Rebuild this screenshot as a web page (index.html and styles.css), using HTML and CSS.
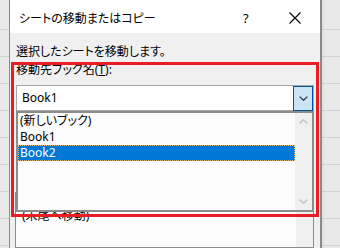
FILE: index.html
```html
<!DOCTYPE html>
<html lang="ja">
<head>
<meta charset="utf-8">
<title>シートの移動またはコピー</title>
<link rel="stylesheet" href="styles.css">
</head>
<body>
<div class="screen">
  <div class="sheet sheet-left"></div>
  <div class="dialog">
    <div class="titlebar">
      <span class="title">シートの移動またはコピー</span>
      <span class="help">?</span>
      <svg class="close" width="12" height="12" viewBox="0 0 12 12"><path d="M0.5 0.5 L11.5 11.5 M11.5 0.5 L0.5 11.5" stroke="#000" stroke-width="1.1" fill="none"/></svg>
    </div>
    <div class="body">
      <p class="intro">選択したシートを移動します。</p>
      <div class="label">移動先ブック名(<u>T</u>):</div>
      <div class="combo">
        <span class="combo-value">Book1</span>
        <span class="dd-btn"><svg width="9" height="5" viewBox="0 0 9 5"><polyline points="0.6,0.6 4.5,4.3 8.4,0.6" stroke="#3a3a3a" stroke-width="1.3" fill="none"/></svg></span>
        <div class="dropdown">
          <ul class="options">
            <li class="opt">(新しいブック)</li>
            <li class="opt">Book1</li>
            <li class="opt selected">Book2</li>
          </ul>
          <div class="scrollbar">
            <span class="arrow"><svg width="9" height="5" viewBox="0 0 9 5"><polyline points="0.6,4.4 4.5,0.7 8.4,4.4" stroke="#c4c4c4" stroke-width="1.5" fill="none"/></svg></span>
            <span class="arrow"><svg width="9" height="5" viewBox="0 0 9 5"><polyline points="0.6,0.6 4.5,4.3 8.4,0.6" stroke="#c4c4c4" stroke-width="1.5" fill="none"/></svg></span>
          </div>
        </div>
      </div>
      <div class="sheetlist">
        <ul class="sheet-items">
          <li class="opt">(末尾へ移動)</li>
        </ul>
        <div class="scrollbar"></div>
      </div>
    </div>
  </div>
  <div class="sheet sheet-right"></div>
  <div class="focus-box"></div>
</div>
</body>
</html>
```
FILE: styles.css
```css
* { box-sizing: border-box; margin: 0; padding: 0; }
html, body { width: 340px; height: 248px; overflow: hidden; }
body {
  font-family: "Noto Sans", "Noto Sans CJK JP", sans-serif;
  font-size: 12px;
  color: #000;
  font-feature-settings: "palt";
}
ul { list-style: none; }

.screen {
  position: relative;
  display: flex;
  width: 340px;
  height: 248px;
}

.sheet {
  background-color: #e9e9e9;
  background-image: repeating-linear-gradient(to bottom, transparent 0 26px, #d2d2d2 26px 27px);
  background-position: 0 3px;
}
.sheet-left { width: 9px; }
.sheet-right { flex: 1; box-shadow: inset 3px 0 3px -2px rgba(0,0,0,0.08); }

.dialog {
  width: 313px;
  height: 248px;
  border-left: 1px solid #8a8a8a;
  border-right: 2px solid #8a8a8a;
  background: #f0f0f0;
  display: flex;
  flex-direction: column;
}

.titlebar {
  height: 33px;
  flex: none;
  background: #fff;
  display: flex;
  align-items: center;
  padding: 3px 19px 0 9px;
}
.title { flex: 1; }
.help { width: 46px; font-size: 13px; }
.close { display: block; }

.body {
  flex: 1;
  display: flex;
  flex-direction: column;
  padding: 11px 0 0 6px;
  line-height: 16px;
}
.label { margin-top: 2px; }
.label u { text-underline-offset: 1px; }

.combo {
  position: relative;
  margin-top: 7px;
  width: 298px;
  height: 26px;
  background: #fff;
  border: 1px solid #a6a6a6;
  display: flex;
  align-items: center;
  padding-left: 5px;
}
.combo-value { flex: 1; }
.dd-btn {
  position: absolute;
  top: 0;
  right: 0;
  width: 20px;
  height: 25px;
  background: #cce4f7;
  border: 1px solid #005499;
  display: flex;
  align-items: center;
  justify-content: center;
}
.dd-btn svg { display: block; }

.dropdown {
  position: absolute;
  left: -1px;
  top: 25px;
  width: 298px;
  height: 101px;
  border: 2px solid #8c8c8c;
  background: #fcfcfc;
  display: flex;
  z-index: 2;
}
.options { flex: 1; }
.opt {
  height: 16px;
  line-height: 16px;
  padding-left: 2px;
  white-space: nowrap;
}
.opt.selected {
  background: #0078d7;
  color: #fff;
  outline: 1px dotted #e9b872;
  outline-offset: -1px;
}
.scrollbar {
  width: 17px;
  background: #f0f0f0;
  display: flex;
  flex-direction: column;
  justify-content: space-between;
}
.arrow {
  height: 17px;
  display: flex;
  align-items: center;
  justify-content: center;
}
.arrow svg { display: block; }

.sheetlist {
  margin: 81px 0 0 -1px;
  width: 299px;
  flex: 1;
  border: 1px solid #8c8c8c;
  background: #fcfcfc;
  display: flex;
}
.sheet-items { flex: 1; padding: 15px 0 0 4px; }

.focus-box {
  position: absolute;
  left: 11px;
  top: 62px;
  width: 308px;
  height: 155px;
  border: 3px solid #ea1d25;
  z-index: 3;
  pointer-events: none;
}
```
